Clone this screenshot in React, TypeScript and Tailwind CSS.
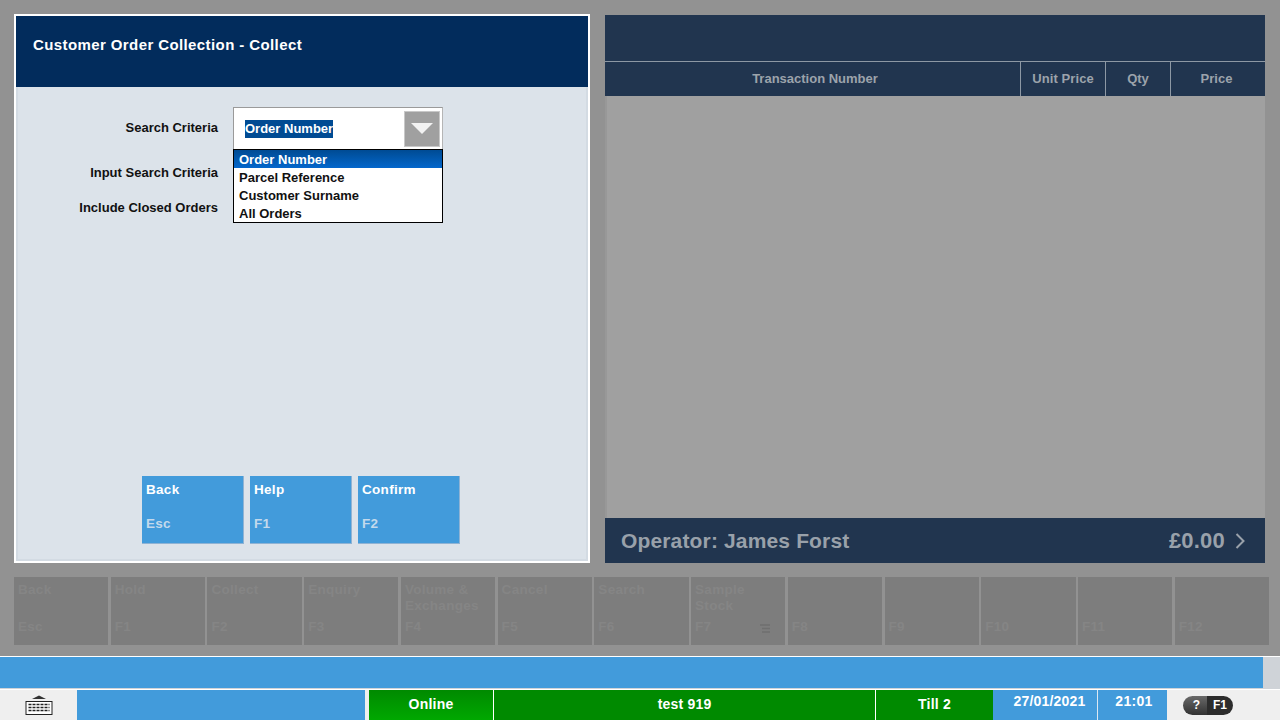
import React from 'react';

const fnKeys = [
  { label: 'Back', key: 'Esc' },
  { label: 'Hold', key: 'F1' },
  { label: 'Collect', key: 'F2' },
  { label: 'Enquiry', key: 'F3' },
  { label: 'Volume & Exchanges', key: 'F4' },
  { label: 'Cancel', key: 'F5' },
  { label: 'Search', key: 'F6' },
  { label: 'Sample Stock', key: 'F7', icon: true },
  { label: '', key: 'F8' },
  { label: '', key: 'F9' },
  { label: '', key: 'F10' },
  { label: '', key: 'F11' },
  { label: '', key: 'F12' },
];

const options = ['Parcel Reference', 'Customer Surname', 'All Orders'];

const ActionButton = ({ label, keyName }: { label: string; keyName: string }) => (
  <div className="w-[102px] h-[68px] bg-[#429bdb] border-r border-b border-[#8fb3d4] pl-1 pt-[6px] text-white">
    <div className="text-[13.5px] font-bold leading-4 tracking-[0.3px]">{label}</div>
    <div className="mt-[18px] text-[13.5px] font-bold leading-4 tracking-[0.3px] text-[#c3d9ec]">{keyName}</div>
  </div>
);

const App = () => {
  return (
    <div className="relative w-[1280px] h-[720px] overflow-hidden bg-[#929292] font-['Liberation_Sans',Arial,sans-serif]">
      <div className="flex gap-[15px] pl-[14px] pt-[14px] h-[563px]">
        {/* left panel */}
        <div className="w-[576px] h-[549px] border-2 border-white bg-[#dce3ea] flex flex-col">
          <div className="h-[71px] bg-[#022c5c] pl-[17px] pt-[20px] text-white text-[15px] font-bold leading-[18px] tracking-[0.4px]">
            Customer Order Collection - Collect
          </div>
          <div className="relative flex-1 border-x-2 border-b-2 border-[#d3dbe3]">
            <div className="absolute right-[368px] top-[33px] text-[13px] font-bold leading-4 text-[#111]">Search Criteria</div>
            <div className="absolute right-[368px] top-[78px] text-[13px] font-bold leading-4 text-[#111]">Input Search Criteria</div>
            <div className="absolute right-[368px] top-[113px] text-[13px] font-bold leading-4 text-[#111]">Include Closed Orders</div>

            {/* combo box */}
            <div className="absolute left-[215px] top-[20px] w-[210px]">
              <div className="h-[42px] bg-white border-t border-l border-r border-[#9a9a9a] border-r-[#b5b5b5] flex items-center pl-[11px] pr-[2px] justify-between">
                <span className="bg-[#004b93] text-white text-[13px] font-bold leading-[18px]">Order Number</span>
                <div className="w-[36px] h-[36px] bg-[#a0a0a0] border border-[#c8c8c8] flex items-center justify-center">
                  <svg width="22" height="11" viewBox="0 0 22 11">
                    <path d="M0 0h22L11 11z" fill="#f2f2f2" />
                  </svg>
                </div>
              </div>
              <div className="h-[74px] bg-white border border-black overflow-hidden">
                <div className="h-[18px] bg-gradient-to-b from-[#004b93] to-[#0467cc] pl-[5px] text-white text-[13px] font-bold leading-[20px]">Order Number</div>
                {options.map((o) => (
                  <div key={o} className="h-[18px] pl-[5px] text-[#111] text-[13px] font-bold leading-[20px]">{o}</div>
                ))}
              </div>
            </div>

            <div className="absolute left-[124px] bottom-[15px] flex gap-[6px]">
              <ActionButton label="Back" keyName="Esc" />
              <ActionButton label="Help" keyName="F1" />
              <ActionButton label="Confirm" keyName="F2" />
            </div>
          </div>
        </div>

        {/* right panel */}
        <div className="w-[660px] h-[548px] mt-[1px] flex flex-col bg-[#a0a0a0]">
          <div className="h-[46px] bg-[#21354f]" />
          <div className="h-[35px] bg-[#21354f] border-t border-[#8d98a4] flex text-[#9ca3ab] text-[13px] font-bold">
            <div className="w-[416px] border-r border-[#8d98a4] flex items-center justify-center pl-[5px]">Transaction Number</div>
            <div className="w-[85px] border-r border-[#8d98a4] flex items-center justify-center tracking-[0.1px]">Unit Price</div>
            <div className="w-[65px] border-r border-[#8d98a4] flex items-center justify-center">Qty</div>
            <div className="flex-1 flex items-center justify-center pr-[3px]">Price</div>
          </div>
          <div className="flex-1 border-l-2 border-[#989898]" />
          <div className="h-[45px] bg-[#21354f] flex items-center justify-between pl-4 pr-5 text-[#99a1aa] text-[21px] font-bold tracking-[0.15px]">
            <span>Operator: James Forst</span>
            <span className="flex items-center gap-[10px] text-[22px] tracking-[0.2px]">
              £0.00
              <svg width="10" height="16" viewBox="0 0 10 16" fill="none" stroke="#99a1aa" strokeWidth="2">
                <path d="M1.5 1l7 7-7 7" />
              </svg>
            </span>
          </div>
        </div>
      </div>

      {/* function keys, disabled */}
      <div className="mt-[14px] ml-[14px] w-[1255px] grid grid-cols-13 gap-[2.4px]">
        {fnKeys.map((k) => (
          <div key={k.key} className="relative h-[68px] bg-[#7d7d7d] pl-1 pt-[5px] text-[#858585] text-[13.5px] font-bold leading-4">
            <div className="h-[34px] leading-4 tracking-[0.3px]">{k.label}</div>
            <div className="mt-[3px] tracking-[0.3px]">{k.key}</div>
            {k.icon && (
              <svg className="absolute right-[14px] bottom-[10px]" width="12" height="12" viewBox="0 0 12 12" fill="none" stroke="#6f6f6f" strokeWidth="1.5">
                <path d="M1 2h10M3 5.5h8M3 9h8" />
              </svg>
            )}
          </div>
        ))}
      </div>

      {/* message bar */}
      <div className="mt-[11px] border-t border-white h-[33px] bg-[#cfd3d8]">
        <div className="w-[1263px] h-[31px] bg-[#429bdb]" />
      </div>

      {/* status bar */}
      <div className="h-[32px] border-t border-white bg-[#efefef] flex text-white text-[14px] font-bold">
        <div className="w-[77px] flex items-center justify-center">
          <svg width="28" height="22" viewBox="0 0 28 22" fill="none">
            <path d="M14 0.5l7 3.5H7z" fill="#333" />
            <rect x="1" y="6.5" width="26" height="13" fill="#fff" stroke="#222" />
            <path d="M3.5 9.5h21M3.5 12.5h21M3.5 15.5h21" stroke="#222" strokeWidth="1.6" strokeDasharray="3 1" />
          </svg>
        </div>
        <div className="w-[288px] bg-[#429bdb]" />
        <div className="w-[4px]" />
        <div className="w-[125px] bg-gradient-to-b from-[#008a00] to-[#00a800] border-r border-white border-b-[1px] border-b-[#c8f0c8] flex items-center justify-center pb-[1px] tracking-[0.2px]">Online</div>
        <div className="w-[382px] bg-[#008a00] border-r border-white border-b-[1px] border-b-[#c8f0c8] flex items-center justify-center pb-[1px] tracking-[0.2px]">test 919</div>
        <div className="w-[117px] bg-[#008a00] border-b-[1px] border-b-[#c8f0c8] flex items-center justify-center pb-[1px] tracking-[0.2px]">Till 2</div>
        <div className="w-[105px] bg-[#429bdb] border-r border-[#dbe8f3] flex justify-center pt-[3px] pl-[9px] leading-4 tracking-[0.2px]">27/01/2021</div>
        <div className="w-[69px] bg-[#429bdb] flex justify-center pt-[3px] pl-[3px] leading-4 tracking-[0.3px]">21:01</div>
        <div className="flex-1 flex items-center pl-4">
          <div className="flex h-[19px] w-[50px] rounded-full overflow-hidden text-[12px] leading-[19px]">
            <div className="w-[24px] bg-gradient-to-b from-[#6a6a6a] to-[#333] text-center pl-[3px]">?</div>
            <div className="flex-1 bg-[#2c2c2c] text-center">F1</div>
          </div>
        </div>
      </div>
    </div>
  );
};

export default App;
